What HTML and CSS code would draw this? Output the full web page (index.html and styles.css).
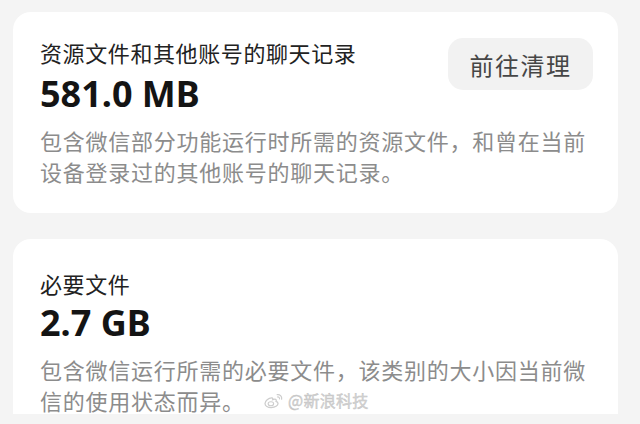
FILE: index.html
```html
<!DOCTYPE html>
<html lang="zh-CN">
<head>
    <meta charset="UTF-8">
    <meta name="viewport" content="width=device-width, initial-scale=1.0">
    <title>存储空间</title>
    <link rel="stylesheet" href="styles.css">
</head>
<body>

    <main class="storage">
        <section class="storage__card">
            <div class="storage__head">
                <div class="storage__info">
                    <h2 class="storage__title">资源文件和其他账号的聊天记录</h2>
                    <p class="storage__size">581.0 MB</p>
                </div>
                <button class="storage__btn" type="button">前往清理</button>
            </div>
            <p class="storage__desc">包含微信部分功能运行时所需的资源文件，和曾在当前设备登录过的其他账号的聊天记录。</p>
        </section>

        <section class="storage__card storage__card--cut">
            <h2 class="storage__title">必要文件</h2>
            <p class="storage__size storage__size--tight">2.7 GB</p>
            <p class="storage__desc">包含微信运行所需的必要文件，该类别的大小因当前微信的使用状态而异。</p>

            <div class="watermark" aria-hidden="true">
                <svg class="watermark__logo" viewBox="0 0 24 18" width="22" height="17">
                    <path d="M9.5 6.2C6 6.2 2.2 9.2 2.2 12.3c0 2.5 3 4.4 6.8 4.4 4.3 0 7.4-2.2 7.4-4.4 0-1.4-1.3-2-2.2-2.3.6-1.4.2-2.6-1.4-2.6-1 0-2.2.6-2.2.6s.6-1.8-1.1-1.8z" fill="none" stroke="#cdcdcd" stroke-width="1.4"/>
                    <ellipse cx="8.6" cy="12.6" rx="3" ry="2.2" fill="none" stroke="#cdcdcd" stroke-width="1.2"/>
                    <path d="M15.5 2.6c2.8-.5 5.4 1.8 4.8 4.8" fill="none" stroke="#cdcdcd" stroke-width="1.4" stroke-linecap="round"/>
                    <path d="M15.8 5.1c1.3-.2 2.5.9 2.2 2.2" fill="none" stroke="#cdcdcd" stroke-width="1.2" stroke-linecap="round"/>
                </svg>
                <span class="watermark__text">@新浪科技</span>
            </div>
        </section>
    </main>

</body>
</html>
```

FILE: styles.css
```css
/* Storage detail page */
:root {
    --color-page: #f4f4f4;
    --color-card: #ffffff;
    --color-title: #222222;
    --color-size: #141414;
    --color-desc: #8c8c8c;
    --color-btn-bg: #f2f2f2;
    --color-btn-text: #464646;

    --font-cjk: "Noto Sans CJK SC", "Noto Sans", sans-serif;
    --font-num: "Noto Sans", "Noto Sans CJK SC", sans-serif;
    --radius-card: 18px;
}

*,
*::before,
*::after {
    box-sizing: border-box;
}

html, body {
    margin: 0;
    height: 100%;
    overflow: hidden;
}

body {
    background: var(--color-page);
    font-family: var(--font-cjk);
}

h2, p { margin: 0; }

.storage {
    display: flex;
    flex-direction: column;
    gap: 26px;
    padding: 12px 22px 0 13px;
}

.storage__card {
    background: var(--color-card);
    border-radius: var(--radius-card);
    padding: 25px 25px 26px 27px;
}

/* Second card runs off the bottom of the shot */
.storage__card--cut {
    position: relative;
    height: 175px;
    padding-top: 29px;
    border-radius: var(--radius-card) var(--radius-card) 0 0;
}

.storage__head {
    display: flex;
    justify-content: space-between;
    align-items: flex-start;
}

.storage__title {
    font-size: 22px;
    font-weight: 400;
    line-height: 30px;
    letter-spacing: 0.6px;
    color: var(--color-title);
}

.storage__size {
    font-family: var(--font-num);
    font-size: 36px;
    font-weight: 700;
    line-height: 44px;
    color: var(--color-size);
    margin-top: 5px;
}

.storage__size--tight {
    margin-top: 3px;
}

.storage__desc {
    font-size: 22px;
    line-height: 31px;
    letter-spacing: 0.75px;
    color: var(--color-desc);
    margin-top: 9px;
}

.storage__btn {
    margin-top: 1px;
    width: 145px;
    height: 52px;
    border: none;
    border-radius: 15px;
    background: var(--color-btn-bg);
    color: var(--color-btn-text);
    font-family: var(--font-cjk);
    font-size: 24px;
    letter-spacing: 1.5px;
    cursor: pointer;
}

/* Weibo watermark stamped over the screenshot */
.watermark {
    position: absolute;
    left: 250px;
    top: 149px;
    display: flex;
    align-items: center;
    gap: 3px;
}

.watermark__text {
    font-size: 16px;
    color: #d3d3d3;
    letter-spacing: 0.3px;
    text-shadow: 0 0 1px #ffffff;
    -webkit-text-stroke: 0.4px #c2c2c2;
}
```
